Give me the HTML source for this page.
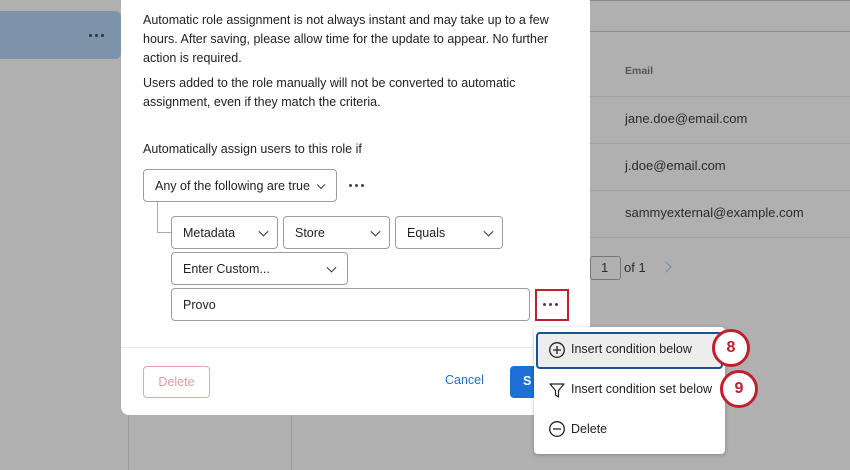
<!DOCTYPE html>
<html><head><meta charset="utf-8"><style>
*{box-sizing:border-box;margin:0;padding:0}
body{width:850px;height:470px;overflow:hidden;background:#b0b0b0;font-family:"Liberation Sans",sans-serif;position:relative;color:#1a1a1a}
.a{position:absolute}
.hl{background:#7b92a9;border-radius:0 6px 6px 0}
.line{background:#9a9a9a}
.t{font-size:13px;color:#2a2a2a}
.modal{left:121px;top:-10px;width:469px;height:425px;background:#fff;border-radius:8px}
.p{font-size:12.5px;line-height:19px;color:#222}
.box{border:1px solid #9d9d9d;border-radius:4px;background:#fff;font-size:12.5px;color:#222;padding-left:11px;display:flex;align-items:center}
.chev{position:absolute;right:10px;top:50%;width:7px;height:7px;border-right:1.3px solid #333;border-bottom:1.3px solid #333;transform:translateY(-70%) rotate(45deg)}
.dots{display:flex;gap:3px}
.dots i{display:block;width:3px;height:3px;border-radius:50%;background:#444}
.menu{left:534px;top:327px;width:191px;height:127px;background:#fff;border-radius:4px;box-shadow:0 1px 4px rgba(0,0,0,.25)}
.item{font-size:12.5px;color:#222;position:absolute;left:37px}
.badge{width:38px;height:38px;border-radius:50%;border:3px solid #c0202e;background:#fff;color:#c0202e;font-weight:bold;font-size:16px;display:flex;align-items:center;justify-content:center}
</style></head><body>
<div class="a hl" style="left:0;top:11px;width:121px;height:48px"></div>
<div class="a dots" style="left:89px;top:34px"><i style="background:#333"></i><i style="background:#333"></i><i style="background:#333"></i></div>
<div class="a line" style="left:128px;top:410px;width:1px;height:60px"></div>
<div class="a line" style="left:291px;top:410px;width:1px;height:60px"></div>
<div class="a" style="left:590px;top:0;width:260px;height:1px;background:#888"></div>
<div class="a" style="left:590px;top:31px;width:260px;height:1px;background:#8a8a8a"></div>
<div class="a t" style="left:625px;top:65px;font-size:10.5px;font-weight:bold;color:#555">Email</div>
<div class="a" style="left:590px;top:96px;width:260px;height:1px;background:#a2a2a2"></div>
<div class="a t" style="left:625px;top:111px">jane.doe@email.com</div>
<div class="a" style="left:590px;top:143px;width:260px;height:1px;background:#a2a2a2"></div>
<div class="a t" style="left:625px;top:158px">j.doe@email.com</div>
<div class="a" style="left:590px;top:190px;width:260px;height:1px;background:#a2a2a2"></div>
<div class="a t" style="left:625px;top:205px">sammyexternal@example.com</div>
<div class="a" style="left:590px;top:237px;width:260px;height:1px;background:#a2a2a2"></div>
<div class="a" style="left:590px;top:256px;width:31px;height:24px;border:1px solid #777;border-radius:3px"></div>
<div class="a t" style="left:601px;top:260px">1</div>
<div class="a t" style="left:624px;top:260px">of 1</div>
<div class="a" style="left:662px;top:263px;width:8px;height:8px;border-right:1.5px solid #6d88a8;border-top:1.5px solid #6d88a8;transform:rotate(45deg)"></div>

<div class="a modal"></div>
<div class="a p" style="left:143px;top:11px;width:430px">Automatic role assignment is not always instant and may take up to a few hours. After saving, please allow time for the update to appear. No further action is required.</div>
<div class="a p" style="left:143px;top:74px;width:430px">Users added to the role manually will not be converted to automatic assignment, even if they match the criteria.</div>
<div class="a p" style="left:143px;top:140px">Automatically assign users to this role if</div>
<div class="a box" style="left:143px;top:169px;width:194px;height:33px">Any of the following are true<div class="chev" style="right:12px;width:6px;height:6px"></div></div>
<div class="a dots" style="left:349px;top:184px"><i></i><i></i><i></i></div>
<div class="a" style="left:157px;top:202px;width:14px;height:31px;border-left:1px solid #aaa;border-bottom:1px solid #aaa"></div>
<div class="a box" style="left:171px;top:216px;width:107px;height:33px">Metadata<div class="chev"></div></div>
<div class="a box" style="left:283px;top:216px;width:107px;height:33px">Store<div class="chev"></div></div>
<div class="a box" style="left:395px;top:216px;width:108px;height:33px">Equals<div class="chev"></div></div>
<div class="a box" style="left:171px;top:252px;width:177px;height:33px">Enter Custom...<div class="chev" style="right:12px"></div></div>
<div class="a box" style="left:171px;top:288px;width:359px;height:33px">Provo</div>
<div class="a" style="left:535px;top:289px;width:34px;height:32px;border:2.5px solid #c0202e"></div>
<div class="a dots" style="left:543px;top:303px"><i></i><i></i><i></i></div>
<div class="a" style="left:121px;top:347px;width:469px;height:1px;background:#e6e6e6"></div>
<div class="a" style="left:143px;top:366px;width:67px;height:32px;border:1px solid #e8a5aa;border-radius:4px;color:#e39aa0;font-size:12.5px;display:flex;align-items:center;justify-content:center">Delete</div>
<div class="a" style="left:445px;top:373px;color:#1f6fd0;font-size:12.5px">Cancel</div>
<div class="a" style="left:510px;top:366px;width:40px;height:32px;background:#1f70d6;border-radius:4px;color:#fff;font-size:12.5px;padding:8px 0 0 13px;font-weight:bold">S</div>

<div class="a menu">
  <div class="a" style="left:2px;top:5px;width:187px;height:37px;background:#ededed;border:2px solid #1d4f91;border-radius:4px"></div>
  <svg class="a" style="left:14px;top:14px" width="18" height="18" viewBox="0 0 18 18"><circle cx="9" cy="9" r="7.3" fill="none" stroke="#222" stroke-width="1.3"/><path d="M9 5v8M5 9h8" stroke="#222" stroke-width="1.3"/></svg>
  <div class="item" style="top:15px">Insert condition below</div>
  <svg class="a" style="left:14px;top:54px" width="18" height="18" viewBox="0 0 18 18"><path d="M2 3h14l-5.5 6.5V16l-3-2V9.5z" fill="none" stroke="#222" stroke-width="1.2" stroke-linejoin="round"/></svg>
  <div class="item" style="top:55px">Insert condition set below</div>
  <svg class="a" style="left:14px;top:93px" width="18" height="18" viewBox="0 0 18 18"><circle cx="9" cy="9" r="7.3" fill="none" stroke="#222" stroke-width="1.3"/><path d="M5 9h8" stroke="#222" stroke-width="1.3"/></svg>
  <div class="item" style="top:95px">Delete</div>
</div>
<div class="a badge" style="left:712px;top:329px">8</div>
<div class="a badge" style="left:720px;top:370px">9</div>
</body></html>
